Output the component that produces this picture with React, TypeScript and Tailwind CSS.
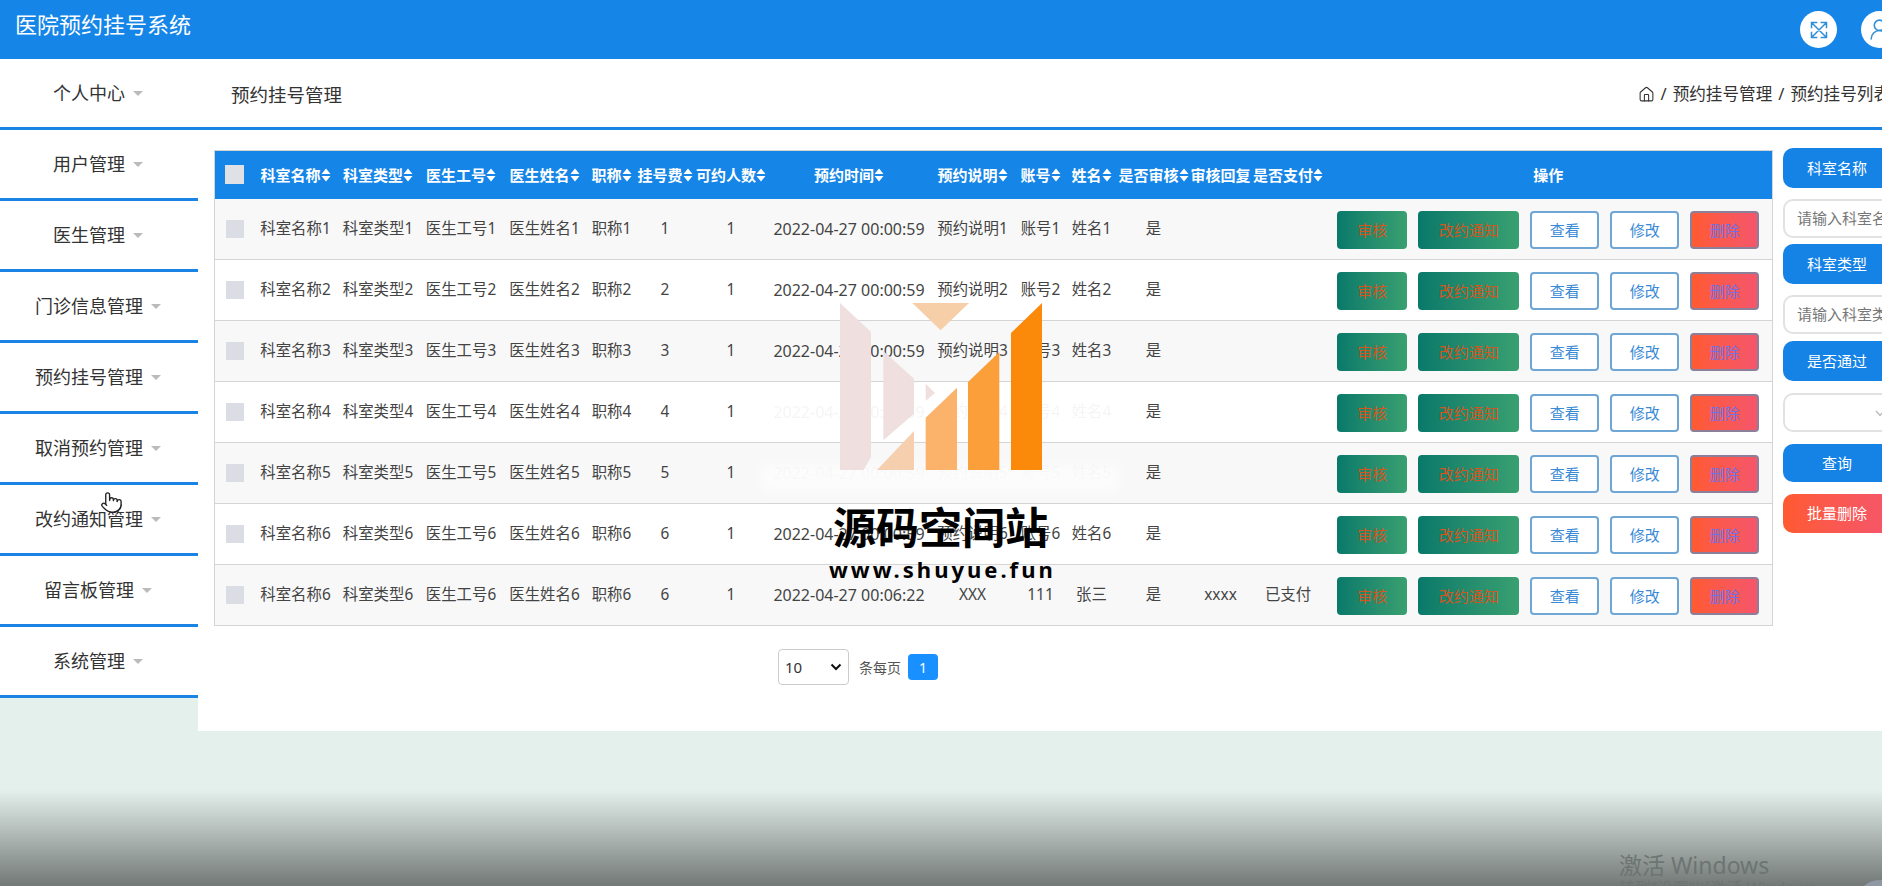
import { House, Pointer, UserRound } from "lucide-react"

const menus = ["个人中心", "用户管理", "医生管理", "门诊信息管理", "预约挂号管理", "取消预约管理", "改约通知管理", "留言板管理", "系统管理"]

const columns = [
  { label: "科室名称", width: "w-[82px]", sort: true },
  { label: "科室类型", width: "w-[83px]", sort: true },
  { label: "医生工号", width: "w-[83px]", sort: true },
  { label: "医生姓名", width: "w-[84px]", sort: true },
  { label: "职称", width: "w-[50px]", sort: true },
  { label: "挂号费", width: "w-[57px]", sort: true },
  { label: "可约人数", width: "w-[75px]", sort: true },
  { label: "预约时间", width: "w-[161px]", sort: true },
  { label: "预约说明", width: "w-[86px]", sort: true },
  { label: "账号", width: "w-[50px]", sort: true },
  { label: "姓名", width: "w-[52px]", sort: true },
  { label: "是否审核", width: "w-[72px]", sort: true },
  { label: "审核回复", width: "w-[62px]", sort: false },
  { label: "是否支付", width: "w-[73px]", sort: true },
]

const makeRow = (n: number, fee: number) => ({
  cells: [`科室名称${n}`, `科室类型${n}`, `医生工号${n}`, `医生姓名${n}`, `职称${n}`, `${fee}`, "1"],
  time: "2022-04-27 00:00:59",
  note: `预约说明${n}`,
  account: `账号${n}`,
  name: `姓名${n}`,
  reply: "",
  paid: "",
  faded: false,
})

const rows = [
  makeRow(1, 1),
  makeRow(2, 2),
  makeRow(3, 3),
  { ...makeRow(4, 4), faded: true },
  { ...makeRow(5, 5), faded: true },
  makeRow(6, 6),
  { ...makeRow(6, 6), time: "2022-04-27 00:06:22", note: "XXX", account: "111", name: "张三", reply: "xxxx", paid: "已支付" },
]

function SortIcon() {
  return (
    <svg width="10" height="14" viewBox="0 0 10 14" className="inline-block shrink-0">
      <path d="M5 0.5 L9.5 6 L0.5 6 Z M5 13.5 L0.5 8 L9.5 8 Z" fill="#ffffff" />
    </svg>
  )
}

function SideLabel({ text, className = "" }: { text: string; className?: string }) {
  return (
    <div className={`h-[40px] w-[108px] shrink-0 rounded-[10px] bg-[#1582e6] text-white text-[15px] flex items-center justify-center ${className}`}>
      {text}
    </div>
  )
}

function SideInput({ text }: { text: string }) {
  return (
    <div className="h-[39px] w-[108px] shrink-0 rounded-[10px] border-2 border-[#e2e2e2] bg-white pl-[12px] text-[15px] text-[#777] flex items-center overflow-hidden whitespace-nowrap">
      {text}
    </div>
  )
}

export default function App() {
  return (
    <div className="relative h-[886px] w-[1882px] overflow-hidden bg-[#e4f0ec] font-['Noto_Sans','Noto_Sans_CJK_SC',sans-serif] text-[#444]">
      {/* top bar */}
      <div className="flex h-[59px] items-center bg-[#1585e8] pl-[15px]">
        <div className="pb-[10px] text-[22px] text-white">医院预约挂号系统</div>
        <div className="ml-auto mr-[-16px] flex gap-[24px]">
          <div className="flex h-[37px] w-[37px] items-center justify-center rounded-full bg-white">
            <svg width="20" height="20" viewBox="0 0 24 24" fill="none" stroke="#2f8fd8" strokeWidth="1.8">
              <path d="M3 3 L21 21 M21 3 L3 21 M3 10 V3 H10 M14 3 H21 V10 M3 14 V21 H10 M21 14 V21 H14" />
            </svg>
          </div>
          <div className="flex h-[37px] w-[37px] items-center justify-center rounded-full bg-white">
            <UserRound className="h-[25px] w-[25px] text-[#2f8fd8]" strokeWidth={1.5} />
          </div>
        </div>
      </div>

      <div className="flex">
        {/* sidebar */}
        <div className="w-[198px] shrink-0">
          {menus.map((menu) => (
            <div key={menu} className="flex h-[71px] items-center justify-center gap-[8px] border-b-[3px] border-[#1a83e4] bg-white pr-[2px] text-[18px] text-[#333]">
              <span>{menu}</span>
              <span className="h-0 w-0 border-x-[5px] border-t-[5px] border-x-transparent border-t-[#bbbbbb]" />
            </div>
          ))}
        </div>

        {/* main panel */}
        <div className="h-[672px] min-w-0 flex-1 bg-white">
          <div className="flex h-[71px] items-center border-b-[3px] border-[#1a83e4] pl-[33px]">
            <div className="pt-[3px] text-[18.5px] text-[#333]">预约挂号管理</div>
            <div className="ml-auto mr-[-8px] flex items-center gap-[6px] whitespace-nowrap pt-[3px] text-[16.6px] text-[#333]">
              <House className="h-[17px] w-[17px]" strokeWidth={1.5} />
              <span>/</span>
              <span>预约挂号管理</span>
              <span>/</span>
              <span>预约挂号列表</span>
            </div>
          </div>

          <div className="flex gap-[11px] pl-[16px] pt-[20px]">
            <div className="w-[1558px] shrink-0">
              <table className="w-[1558px] table-fixed border-collapse border border-[#d4d4d4] text-[15.4px]">
                <colgroup>
                  <col className="w-[40px]" />
                  {columns.map((col) => (
                    <col key={col.label} className={col.width} />
                  ))}
                  <col className="w-[448px]" />
                </colgroup>
                <thead>
                  <tr className="h-[48px] bg-[#1585e8] text-[15px] text-white">
                    <th>
                      <div className="mx-auto h-[19px] w-[19px] bg-[#dfe1e6]" />
                    </th>
                    {columns.map((col) => (
                      <th key={col.label} className="font-bold">
                        <div className="flex items-center justify-center whitespace-nowrap">
                          {col.label}
                          {col.sort && <SortIcon />}
                        </div>
                      </th>
                    ))}
                    <th className="font-bold">操作</th>
                  </tr>
                </thead>
                <tbody>
                  {rows.map((row, index) => (
                    <tr key={index} className={`h-[61px] border-b border-[#d4d4d4] ${index % 2 === 0 ? "bg-[#f8f8f8]" : "bg-white"}`}>
                      <td>
                        <div className="mx-auto h-[18px] w-[18px] bg-[#dadde3]" />
                      </td>
                      {row.cells.map((cell, i) => (
                        <td key={i} className="whitespace-nowrap text-center">{cell}</td>
                      ))}
                      <td className={`whitespace-nowrap text-center text-[16px] ${row.faded ? "opacity-5" : ""}`}>{row.time}</td>
                      <td className={`whitespace-nowrap text-center ${row.faded ? "opacity-5" : ""}`}>{row.note}</td>
                      <td className={`whitespace-nowrap text-center ${row.faded ? "opacity-5" : ""}`}>{row.account}</td>
                      <td className={`whitespace-nowrap text-center ${row.faded ? "opacity-5" : ""}`}>{row.name}</td>
                      <td className="text-center">是</td>
                      <td className="text-center">{row.reply}</td>
                      <td className="text-center">{row.paid}</td>
                      <td>
                        <div className="flex justify-center gap-[11px] pt-[2px] text-[15px]">
                          <button className="h-[38px] w-[70px] rounded-[4px] bg-gradient-to-r from-[#07796a] to-[#38a070] text-[#d2561f]">审核</button>
                          <button className="h-[38px] w-[101px] rounded-[4px] bg-gradient-to-r from-[#07796a] to-[#38a070] text-[#d2561f]">改约通知</button>
                          <button className="h-[38px] w-[69px] rounded-[4px] border-2 border-[#6ea6d6] bg-white text-[#3a8ad6]">查看</button>
                          <button className="h-[38px] w-[69px] rounded-[4px] border-2 border-[#6ea6d6] bg-white text-[#3a8ad6]">修改</button>
                          <button className="h-[38px] w-[69px] rounded-[4px] border-2 border-[#8c7f9a] bg-gradient-to-r from-[#ff5a30] to-[#f5566a] text-[#6d72e6]">删除</button>
                        </div>
                      </td>
                    </tr>
                  ))}
                </tbody>
              </table>

              {/* pagination */}
              <div className="ml-[564px] mt-[23px] flex items-center">
                <div className="flex h-[36px] w-[71px] items-center justify-between rounded-[4px] border border-[#cccccc] px-[6px] text-[15px] text-[#333]">
                  <span>10</span>
                  <svg width="12" height="8" viewBox="0 0 12 8">
                    <path d="M1.5 1.5 L6 6 L10.5 1.5" fill="none" stroke="#111111" strokeWidth="2" />
                  </svg>
                </div>
                <span className="ml-[10px] text-[14px] text-[#555]">条每页</span>
                <div className="ml-[7px] flex h-[26px] w-[30px] items-center justify-center rounded-[4px] bg-[#1890ff] text-[14px] text-white">1</div>
              </div>
            </div>

            {/* search column */}
            <div className="mt-[-2px] flex shrink-0 flex-col">
              <SideLabel text="科室名称" />
              <div className="mt-[11px]"><SideInput text="请输入科室名称" /></div>
              <SideLabel text="科室类型" className="mt-[6px]" />
              <div className="mt-[11px]"><SideInput text="请输入科室类型" /></div>
              <SideLabel text="是否通过" className="mt-[7px]" />
              <div className="relative mt-[12px] h-[39px] w-[108px] rounded-[10px] border-2 border-[#e2e2e2] bg-white">
                <svg width="10" height="7" viewBox="0 0 10 7" className="absolute left-[90px] top-[15px]">
                  <path d="M1 1 L5 5.5 L9 1" fill="none" stroke="#bbbbbb" strokeWidth="1.4" />
                </svg>
              </div>
              <SideLabel text="查询" className="mt-[12px] !h-[38px]" />
              <div className="mt-[12px] flex h-[39px] w-[108px] items-center justify-center rounded-[10px] bg-gradient-to-r from-[#ff5a30] to-[#f5566a] text-[15px] text-white">批量删除</div>
            </div>
          </div>
        </div>
      </div>

      {/* watermark */}
      <div className="absolute left-[760px] top-[464px] h-[28px] w-[360px] bg-white/60 blur-[6px]" />
      <svg className="absolute left-[840px] top-[303px]" width="202.33" height="167.33" viewBox="420 68 607 502">
        <path d="M420 68 L513 155 L513 530 L490 570 L420 570 Z" fill="#f0dfdf" />
        <path d="M550 212 L642 295 L642 400 L550 480 Z" fill="#f0dfdf" />
        <path d="M530 570 L642 452 L642 570 Z" fill="#f6d0ae" />
        <path d="M677 310 L705 338 L677 362 Z" fill="#f0dfdf" />
        <path d="M637 68 L807 68 L722 150 Z" fill="#f6cfa8" />
        <path d="M677 412 L771 322 L771 570 L677 570 Z" fill="#fbb36b" />
        <path d="M804 305 L898 215 L898 570 L804 570 Z" fill="#fb9f3a" />
        <path d="M933 158 L1026 68 L1026 570 L933 570 Z" fill="#fb8a0a" />
      </svg>
      <div className="absolute left-[833px] top-[498px] whitespace-nowrap text-[43px] font-bold leading-[60px] text-black">源码空间站</div>
      <div className="absolute left-[829px] top-[554px] whitespace-nowrap text-[22px] font-bold leading-[30px] tracking-[3px] text-black">www.shuyue.fun</div>

      {/* mouse pointer */}
      <Pointer className="absolute left-[100px] top-[491px] h-[23px] w-[23px] fill-white text-[#222]" strokeWidth={1.4} />

      {/* dark fade along the bottom of the recording */}
      <div className="absolute bottom-0 left-0 h-[96px] w-full bg-gradient-to-b from-transparent to-[#000000]/50" />

      <div className="absolute left-[1619px] top-[849px] whitespace-nowrap text-[23px] leading-[32px] text-[#6d7472]">激活 Windows</div>
      <div className="absolute left-[1619px] top-[878px] whitespace-nowrap text-[16px] leading-[20px] text-[#6d7472]">转到“设置”以激活 Windows。</div>
      <div className="absolute left-[1857px] top-[880px] h-[44px] w-[44px] rounded-full bg-[#8f98a3]" />
    </div>
  )
}
